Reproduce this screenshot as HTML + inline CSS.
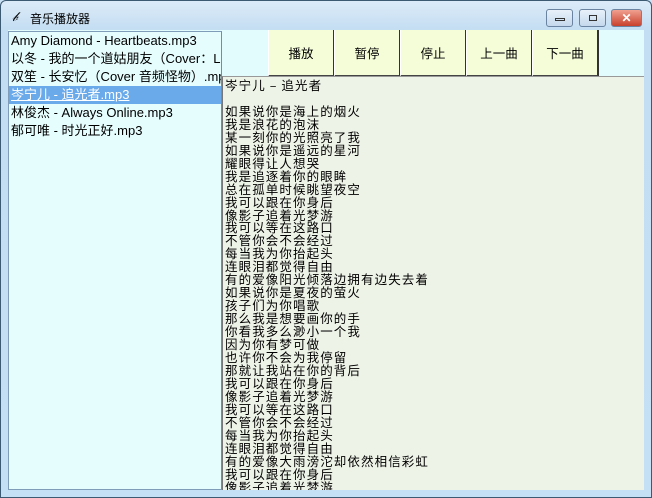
<!DOCTYPE html>
<html><head><meta charset="utf-8"><style>
*{margin:0;padding:0;box-sizing:border-box}
body{width:652px;height:498px;overflow:hidden;background:#c9e2f5;font-family:"Liberation Sans","Noto Sans CJK SC",sans-serif;position:relative}
.frame{position:absolute;left:0;top:0;width:652px;height:498px;border:1px solid #3d5a73;border-radius:6px 6px 0 0;background:linear-gradient(#dcebf8,#c3ddf2 30px,#c4e0f4)}
.title{position:absolute;left:30px;top:10px;font-size:12px;color:#000}
.icon{position:absolute;left:12px;top:9px;font-size:13px;font-style:italic}
.btn{position:absolute;top:9px;height:18px;border:1px solid #6a83a0;border-radius:3px;background:linear-gradient(#e8f1fa,#c5d8ec)}
.btn i{position:absolute;border:1px solid #333}
.client{position:absolute;left:8px;top:30px;width:636px;height:460px;background:#e2fbfd}
.list{position:absolute;left:8px;top:31px;width:214px;height:459px;background:#e6fdfe;border:1px solid #7f9db9;border-right:1px solid #888;font-size:13px;line-height:18px;padding-top:0px}
.list div{padding-left:2px;white-space:nowrap;overflow:hidden;height:18px}
.list .sel{background:#6aa9ea;color:#fff;text-decoration:underline}
.b{position:absolute;top:30px;width:67px;height:47px;background:#f4fcd8;border-right:2px solid #333;border-bottom:2px solid #444;border-left:1px solid #fff;font-size:12.5px;text-align:center;line-height:46px;font-family:"Noto Sans CJK SC",sans-serif}
.txt{position:absolute;left:222px;top:76px;width:422px;height:414px;background:#eef3e8;border-left:1px solid #777;border-top:1px solid #999;overflow:hidden;font-family:"Noto Sans CJK SC","WenQuanYi Zen Hei",sans-serif;font-size:12.5px;line-height:12.95px;letter-spacing:1.1px;padding:2px 0 0 2px;white-space:pre}
</style></head><body>
<div class="frame"></div>
<div class="icon">𝒷</div>
<div class="title">音乐播放器</div>
<div class="btn" style="left:546px;width:27px"><i style="left:8px;top:8px;width:10px;height:3px"></i></div>
<div class="btn" style="left:579px;width:27px"><i style="left:9px;top:5px;width:8px;height:6px"></i></div>
<div class="btn" style="left:611px;width:31px;background:linear-gradient(#f0a090,#c8402c);color:#fff;font-size:12px;text-align:center;line-height:16px;font-weight:bold">✕</div>
<div class="client"></div>
<div class="list">
<div>Amy Diamond - Heartbeats.mp3</div>
<div>以冬 - 我的一个道姑朋友（Cover：Lor</div>
<div>双笙 - 长安忆（Cover 音频怪物）.mp3</div>
<div class="sel">岑宁儿 - 追光者.mp3</div>
<div>林俊杰 - Always Online.mp3</div>
<div>郁可唯 - 时光正好.mp3</div>
</div>
<div class="b" style="left:268px">播放</div>
<div class="b" style="left:334px">暂停</div>
<div class="b" style="left:400px">停止</div>
<div class="b" style="left:466px">上一曲</div>
<div class="b" style="left:532px">下一曲</div>
<div class="txt">岑宁儿 – 追光者

如果说你是海上的烟火
我是浪花的泡沫
某一刻你的光照亮了我
如果说你是遥远的星河
耀眼得让人想哭
我是追逐着你的眼眸
总在孤单时候眺望夜空
我可以跟在你身后
像影子追着光梦游
我可以等在这路口
不管你会不会经过
每当我为你抬起头
连眼泪都觉得自由
有的爱像阳光倾落边拥有边失去着
如果说你是夏夜的萤火
孩子们为你唱歌
那么我是想要画你的手
你看我多么渺小一个我
因为你有梦可做
也许你不会为我停留
那就让我站在你的背后
我可以跟在你身后
像影子追着光梦游
我可以等在这路口
不管你会不会经过
每当我为你抬起头
连眼泪都觉得自由
有的爱像大雨滂沱却依然相信彩虹
我可以跟在你身后
像影子追着光梦游</div>
</body></html>
